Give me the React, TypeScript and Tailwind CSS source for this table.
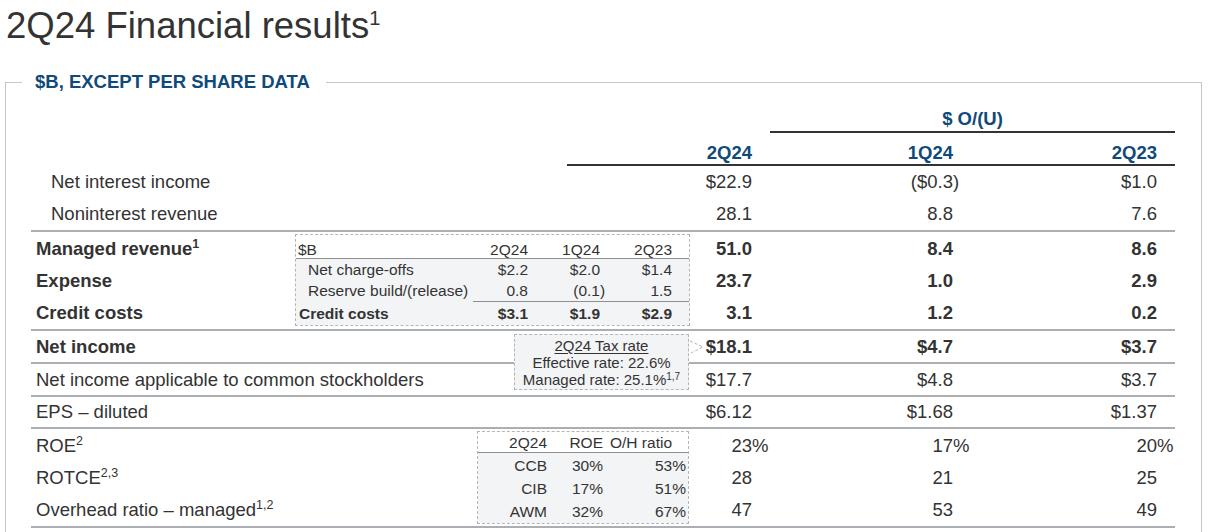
import type { ReactNode } from "react"

type Row = {
  label: ReactNode
  h: string
  v: [ReactNode, ReactNode, ReactNode]
  bold?: boolean
  indent?: boolean
}

// number with a trailing char (% or ")") that hangs past the column edge
function Num({ v, hang }: { v: string; hang?: string }) {
  return (
    <span className="whitespace-nowrap">
      {v}
      {hang && <span className="inline-block w-0 text-left">{hang}</span>}
    </span>
  )
}

function Sup({ children }: { children: ReactNode }) {
  return <sup className="-top-[7px] text-[12.5px]">{children}</sup>
}

const colCls = ["w-[80px] pr-[18px]", "w-[202px] pr-[19px]", "w-[203px] pr-[18px]"]

function Group({ rows, box }: { rows: Row[]; box?: ReactNode }) {
  return (
    <div className="flex border-b-2 border-[#a9afb5]">
      <div className="flex w-[659px]">
        <div className="flex flex-1 flex-col">
          {rows.map((r, i) => (
            <div
              key={i}
              className={`${r.h} flex items-center whitespace-nowrap ${r.indent ? "pl-[20px]" : "pl-[5px]"} ${r.bold ? "font-bold" : ""}`}
            >
              {r.label}
            </div>
          ))}
        </div>
        {box}
      </div>
      {colCls.map((c, ci) => (
        <div key={ci} className={`flex flex-col ${c}`}>
          {rows.map((r, i) => (
            <div key={i} className={`${r.h} flex items-center justify-end whitespace-nowrap ${r.bold ? "font-bold" : ""}`}>
              {r.v[ci]}
            </div>
          ))}
        </div>
      ))}
    </div>
  )
}

function CreditBox() {
  return (
    <div className="mt-[2px] w-[395px] shrink-0 self-start border border-dashed border-[#b5b5b5] text-[15.5px] leading-[17px]">
      <div className="flex h-[24px] items-end border-b border-[#8f8f8f] bg-white">
        <div className="w-[177px] pl-[2px]">$B</div>
        <div className="w-[55px] text-right">2Q24</div>
        <div className="w-[72px] text-right">1Q24</div>
        <div className="w-[72px] text-right">2Q23</div>
      </div>
      <div className="bg-[#f3f4f6]">
        <div className="flex h-[21px] items-center">
          <div className="w-[177px] pl-[12px]">Net charge-offs</div>
          <div className="w-[55px] text-right">$2.2</div>
          <div className="w-[72px] text-right">$2.0</div>
          <div className="w-[72px] text-right">$1.4</div>
        </div>
        <div className="flex h-[21px] items-center">
          <div className="w-[177px] whitespace-nowrap pl-[12px]">Reserve build/(release)</div>
          <div className="w-[55px] text-right">0.8</div>
          <div className="w-[72px] text-right">
            <Num v="(0.1" hang=")" />
          </div>
          <div className="w-[72px] text-right">1.5</div>
        </div>
        <div className="flex font-bold">
          <div className="flex h-[24px] w-[177px] items-center pl-[3px]">Credit costs</div>
          <div className="flex h-[24px] flex-1 items-center border-t border-[#8f8f8f] pr-[17px]">
            <div className="w-[55px] text-right">$3.1</div>
            <div className="w-[72px] text-right">$1.9</div>
            <div className="w-[72px] text-right">$2.9</div>
          </div>
        </div>
      </div>
    </div>
  )
}

function RoeBox() {
  const rows = [
    ["CCB", "30%", "53%"],
    ["CIB", "17%", "51%"],
    ["AWM", "32%", "67%"],
  ]
  return (
    <div className="mr-[1px] mt-[2px] w-[212px] shrink-0 self-start border border-dashed border-[#b5b5b5] text-[15.5px] leading-[17px]">
      <div className="flex h-[21px] items-center border-b border-[#8f8f8f] bg-white">
        <div className="w-[69px] text-right">2Q24</div>
        <div className="w-[56px] text-right">ROE</div>
        <div className="flex-1 pr-[16px] text-right">O/H ratio</div>
      </div>
      <div className="bg-[#f3f4f6] pt-[1px]">
        {rows.map((r) => (
          <div key={r[0]} className="flex h-[23px] items-center">
            <div className="w-[69px] text-right">{r[0]}</div>
            <div className="w-[56px] text-right">{r[1]}</div>
            <div className="flex-1 pr-[2px] text-right">{r[2]}</div>
          </div>
        ))}
      </div>
    </div>
  )
}

export default function App() {
  return (
    <div className="min-h-screen bg-white font-['Liberation_Sans',Arial,sans-serif] text-[#333333]">
      <div className="h-[46px] whitespace-nowrap pl-[6px] pt-[6px] text-[36.5px] leading-[40px]">
        2Q24 Financial results<sup className="-top-[13px] text-[20px]">1</sup>
      </div>

      <fieldset className="ml-[5px] mt-[25px] w-[1197px] border border-[#c6c6c6] pb-[20px]">
        <legend className="ml-[16px] pl-[13px] pr-[16px] text-[18.5px] font-bold leading-[22px] text-[#0f4a7a]">
          $B, EXCEPT PER SHARE DATA
        </legend>

        <div className="relative ml-[25px] w-[1144px] text-[18.5px] leading-[22px]">
          {/* column headers */}
          <div className="flex h-[40px] justify-end">
            <div className="w-[405px] border-b-2 border-[#333333] pt-[15px] text-center font-bold text-[#0f4a7a]">
              $ O/(U)
            </div>
          </div>
          <div className="flex h-[33px] justify-end">
            <div className="flex w-[608px] border-b-2 border-[#333333] pt-[9px] font-bold text-[#0f4a7a]">
              <div className="w-[203px] pr-[18px] text-right">2Q24</div>
              <div className="w-[202px] pr-[19px] text-right">1Q24</div>
              <div className="w-[203px] pr-[18px] text-right">2Q23</div>
            </div>
          </div>

          <Group
            rows={[
              { label: "Net interest income", h: "h-[32px]", indent: true, v: ["$22.9", <Num v="($0.3" hang=")" />, "$1.0"] },
              { label: "Noninterest revenue", h: "h-[32px]", indent: true, v: ["28.1", "8.8", "7.6"] },
            ]}
          />
          <Group
            box={<CreditBox />}
            rows={[
              { label: <span>Managed revenue<Sup>1</Sup></span>, h: "h-[33px]", bold: true, v: ["51.0", "8.4", "8.6"] },
              { label: "Expense", h: "h-[31px]", bold: true, v: ["23.7", "1.0", "2.9"] },
              { label: "Credit costs", h: "h-[33px]", bold: true, v: ["3.1", "1.2", "0.2"] },
            ]}
          />
          <Group rows={[{ label: "Net income", h: "h-[31px]", bold: true, v: ["$18.1", "$4.7", "$3.7"] }]} />
          <Group
            rows={[{ label: "Net income applicable to common stockholders", h: "h-[31px]", v: ["$17.7", "$4.8", "$3.7"] }]}
          />
          <Group rows={[{ label: "EPS – diluted", h: "h-[30px]", v: ["$6.12", "$1.68", "$1.37"] }]} />
          <Group
            box={<RoeBox />}
            rows={[
              {
                label: <span>ROE<Sup>2</Sup></span>,
                h: "h-[33px]",
                v: [<Num v="23" hang="%" />, <Num v="17" hang="%" />, <Num v="20" hang="%" />],
              },
              { label: <span>ROTCE<Sup>2,3</Sup></span>, h: "h-[32px]", v: ["28", "21", "25"] },
              { label: <span>Overhead ratio – managed<Sup>1,2</Sup></span>, h: "h-[32px]", v: ["47", "53", "49"] },
            ]}
          />

          {/* tax rate callout */}
          <div className="absolute left-[483px] top-[241px] h-[56px] w-[175px] border border-dashed border-[#b5b5b5] bg-[#f3f4f6] pt-[2px] text-center text-[15px] leading-[17px]">
            <div className="underline underline-offset-2">2Q24 Tax rate</div>
            <div>Effective rate: 22.6%</div>
            <div>
              Managed rate: 25.1%<sup className="-top-[5px] text-[10px]">1,7</sup>
            </div>
          </div>
          <svg className="absolute left-[657px] top-[246px]" width="18" height="16" viewBox="0 0 18 16">
            <polyline points="2,2 15,8 3,14" fill="none" stroke="#b5b5b5" strokeWidth="1" strokeDasharray="3 2" />
          </svg>
        </div>
      </fieldset>
    </div>
  )
}
